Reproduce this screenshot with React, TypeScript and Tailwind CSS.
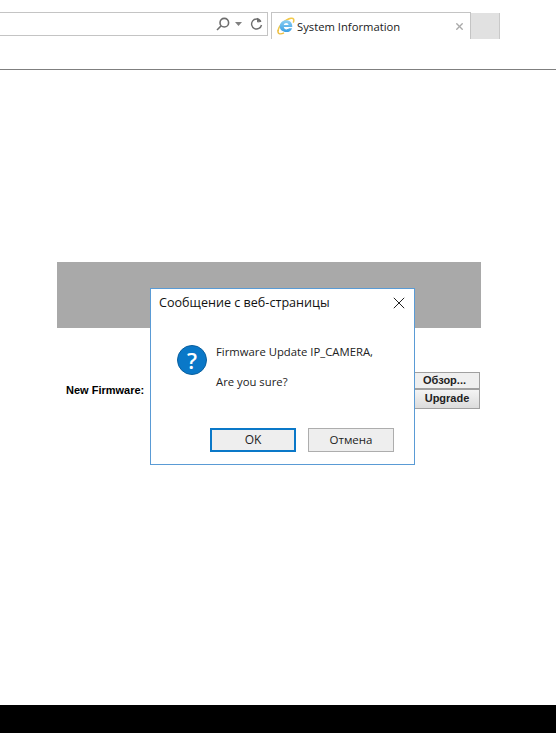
import React from 'react';
import { X } from 'lucide-react';

const ui = { fontFamily: '"Open Sans", "Noto Sans", sans-serif' };

const IeLogo = () => (
  <svg width="18" height="18" viewBox="0 0 18 18">
    <defs>
      <linearGradient id="ie" x1="0" y1="0" x2="0" y2="1">
        <stop offset="0" stopColor="#8ccff4" />
        <stop offset="1" stopColor="#3b9fe2" />
      </linearGradient>
    </defs>
    <path d="M1.2 14C1 9.5 8 2.2 14 1.2c2.6-.4 3.6 1.4 2.2 4.4" fill="none" stroke="#f2c94a" strokeWidth="1.5" />
    <path d="M2.8 9.6C2.8 5.8 5.6 3.2 9.3 3.2c3.7 0 6.1 2.7 6 6.8H6.8c.2 1.6 1.2 2.4 2.7 2.4 1.1 0 1.9-.4 2.4-1.2h3.2c-1 2.6-3 3.9-5.7 3.9-3.8 0-6.6-2.3-6.6-5.5zm4-1.7h4.8c-.2-1.2-1.1-2-2.4-2s-2.2.8-2.4 2z" fill="url(#ie)" fillRule="evenodd" />
    <path d="M1.2 13c-1 3.6 1.6 5 5.8 2.8" fill="none" stroke="#ecbd3f" strokeWidth="1.5" />
  </svg>
);

const Toolbar = () => (
  <div className="h-[70px] shrink-0 border-b border-[#7f7f7f] pt-3 flex items-start" style={ui}>
    <div className="w-[268px] h-6 border border-l-0 border-[#c4c4c4] flex items-center justify-end gap-[5px] pr-[4px]">
      <svg width="14" height="14" viewBox="0 0 14 14" fill="none" stroke="#6e6e6e" strokeWidth="1.6">
        <circle cx="8.3" cy="5.7" r="4.3" />
        <path d="M5.2 8.8 1 13" />
      </svg>
      <svg width="7" height="4" viewBox="0 0 7 4" fill="#808080">
        <path d="M0 0h7L3.5 4z" />
      </svg>
      <svg width="13" height="14" viewBox="0 0 13 14" fill="none" stroke="#6e6e6e" strokeWidth="1.4" className="ml-[3px]">
        <path d="M10.6 4A5 5 0 1 0 11.5 8" />
        <path d="M7.5 .8V4.6h3.8" fill="#6e6e6e" stroke="none" />
        <path d="M7.6 1v4l3.6-.6" strokeWidth="1" />
      </svg>
    </div>
    <div className="ml-[3px] w-[200px] h-[27px] border border-b-0 border-[#c4c4c4] flex items-center pl-[5px] pr-[5px] bg-white">
      <IeLogo />
      <span className="ml-[2px] pt-[2px] text-[11.25px] text-[#1a1a1a] flex-1">System Information</span>
      <X size={11} strokeWidth={3} className="text-[#a9a9a9] mt-[1px]" />
    </div>
    <div className="w-[29px] h-[26px] mt-[1px] bg-[#e1e1e1] border-r border-[#c9c9c9]" />
  </div>
);

const FormArea = () => (
  <div className="flex-1 pt-[192px] pl-[57px]" style={{ fontFamily: '"Liberation Sans", Arial, sans-serif' }}>
    <div className="w-[424px] h-[66px] bg-[#a9a9a9]" />
    <div className="w-[423px] mt-[44px] flex items-center justify-between">
      <span className="ml-[9px] text-[11px] font-bold text-black">New Firmware:</span>
      <div className="flex flex-col">
        <button className="w-[66px] h-[17px] pr-[5px] bg-[#efefef] border border-[#a0a0a0] text-[11px] font-bold text-[#222] leading-none">Обзор...</button>
        <button className="w-[66px] h-[20px] mt-[-0.5px] bg-gradient-to-b from-[#f4f4f4] to-[#dcdcdc] border border-[#a0a0a0] text-[11px] font-bold text-[#222] leading-none">Upgrade</button>
      </div>
    </div>
  </div>
);

const ConfirmDialog = () => (
  <div className="absolute left-[150px] top-[288px] w-[265px] h-[177px] bg-white border border-[#5a9bd5] flex flex-col" style={ui}>
    <div className="h-[29px] flex items-center justify-between pl-2 pr-[9px]">
      <span className="text-[12.6px] text-[#111]">Сообщение с веб-страницы</span>
      <svg width="12" height="12" viewBox="0 0 12 12" stroke="#222" strokeWidth="1" fill="none" className="mb-[1px]">
        <path d="M.8.8l10.4 10.4M11.2.8.8 11.2" />
      </svg>
    </div>
    <div className="flex gap-[9px] pl-[26px] pt-[27px]">
      <div className="w-[30px] h-[30px] rounded-full bg-[#0a78c8] border border-[#0a5f9e] flex items-center justify-center text-white text-[22px] font-semibold leading-none">?</div>
      <div className="text-[11.3px] text-[#222] mt-[-1px]">
        <p className="h-[30px]">Firmware Update IP_CAMERA,</p>
        <p>Are you sure?</p>
      </div>
    </div>
    <div className="mt-auto mb-3 flex justify-end gap-3 pr-5">
      <button className="w-[86px] h-6 bg-[#eeeeee] border-2 border-[#0a78c8] text-[12px] text-[#222]">OK</button>
      <button className="w-[86px] h-6 bg-[#eeeeee] border border-[#adadad] text-[11.5px] text-[#222]">Отмена</button>
    </div>
  </div>
);

export default function App() {
  return (
    <div className="relative w-[556px] h-[733px] bg-white flex flex-col overflow-hidden">
      <Toolbar />
      <FormArea />
      <div className="h-[28px] shrink-0 bg-black" />
      <ConfirmDialog />
    </div>
  );
}
